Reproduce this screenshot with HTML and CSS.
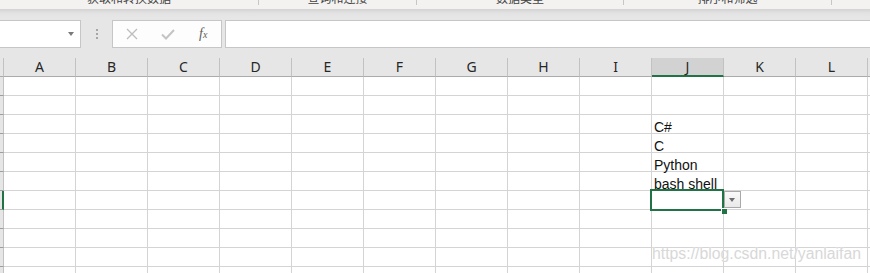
FILE: index.html
```html
<!DOCTYPE html>
<html lang="zh">

<head>
    <meta charset="utf-8">
    <meta name="viewport" content="width=device-width, initial-scale=1.0">
    <title>Excel</title>

    <link rel="stylesheet" href="styles.css">
</head>

<body>

    <header class="ribbon">
        <div class="group g1"><span>获取和转换数据</span></div>
        <div class="group g2"><span>查询和连接</span></div>
        <div class="group g3"><span>数据类型</span></div>
        <div class="group g4"><span>排序和筛选</span></div>
        <div class="group g5"></div>
    </header>

    <section class="formula-row">
        <div class="name-box">
            <span class="arrow"></span>
        </div>
        <div class="dots"><i></i><i></i><i></i></div>
        <div class="func-box">
            <svg class="btn" width="12" height="12" viewBox="0 0 12 12">
                <path d="M1 1 L11 11 M11 1 L1 11" stroke="#bdbdbd" stroke-width="1.3" fill="none" />
            </svg>
            <svg class="btn" width="14" height="12" viewBox="0 0 14 12">
                <path d="M1 6.5 L5 10.5 L13 2" stroke="#c4c4c4" stroke-width="2" fill="none" />
            </svg>
            <span class="fx"><i>f</i><span>x</span></span>
        </div>
        <div class="formula-input"></div>
    </section>

    <main class="sheet">
        <div class="grid">
            <div class="corner"></div>
            <div class="col-head">A</div>
            <div class="col-head">B</div>
            <div class="col-head">C</div>
            <div class="col-head">D</div>
            <div class="col-head">E</div>
            <div class="col-head">F</div>
            <div class="col-head">G</div>
            <div class="col-head">H</div>
            <div class="col-head">I</div>
            <div class="col-head active">J</div>
            <div class="col-head">K</div>
            <div class="col-head">L</div>
            <div class="col-head">M</div>
        </div>
        <div class="grid rows"></div>

        <div class="selection"><span class="handle"></span></div>
        <div class="drop-btn"><span></span></div>
        <div class="watermark">https://blog.csdn.net/yanlaifan</div>
    </main>

    <script>
        // fill the rows, column J (index 9) holds the list values
        let werte = ["", "", "C#", "C", "Python", "bash shell", "", "", "", "", ""];
        let rows = document.querySelector(".rows");

        werte.forEach((wert, i) => {
            let kopf = document.createElement("div");
            kopf.className = "row-head";
            if (i == 6) kopf.classList.add("active");
            rows.appendChild(kopf);

            for (let c = 0; c < 13; c++) {
                let celle = document.createElement("div");
                celle.className = "cell";
                if (c == 9) celle.textContent = wert;
                rows.appendChild(celle);
            }
        });
    </script>

</body>

</html>
```

FILE: styles.css
```css
body {
    margin: 0;
    width: 870px;
    height: 273px;
    overflow: hidden;
    background: #e6e6e6;
    font-family: "Liberation Sans", Arial, sans-serif;
}

/* ribbon rest at the top */
.ribbon {
    height: 9px;
    display: flex;
    background: #f3f2f1;
    overflow: hidden;
}

.group {
    height: 5px;
    border-right: 1px solid #c8c6c4;
    text-align: center;
    overflow: hidden;
    flex: none;
}

.group span {
    display: block;
    margin-top: -8px;
    font-family: "Noto Sans CJK SC", sans-serif;
    font-size: 12px;
    line-height: 12px;
    color: #444;
}

.g1 { width: 258px; }
.g2 { width: 157px; }
.g3 { width: 206px; }
.g4 { width: 207px; }
.g5 { flex: 1; border: none; }

/* formula bar */
.formula-row {
    display: flex;
    height: 28px;
    padding-top: 11px;
    padding-bottom: 10px;
    background: linear-gradient(#d3d3d3, #e2e2e2 4px, #e6e6e6 8px);
}

.name-box {
    width: 82px;
    margin-left: -1px;
    box-sizing: border-box;
    background: white;
    border: 1px solid #c6c6c6;
    position: relative;
}

.arrow {
    position: absolute;
    right: 6px;
    top: 11px;
    border-left: 3.5px solid transparent;
    border-right: 3.5px solid transparent;
    border-top: 4px solid #7a7a7a;
}

.dots {
    width: 31px;
    display: flex;
    flex-direction: column;
    align-items: center;
    justify-content: center;
    gap: 2px;
}

.dots i {
    width: 2px;
    height: 2px;
    background: #a6a6a6;
}

.func-box {
    width: 110px;
    box-sizing: border-box;
    background: #fdfdfd;
    border: 1px solid #c6c6c6;
    display: flex;
    align-items: center;
    padding-left: 13px;
    gap: 23px;
}

.fx {
    font-family: "Liberation Serif", serif;
    color: #5f5f5f;
    font-size: 14px;
    margin-left: 1px;
}

.fx span {
    font-style: italic;
    font-size: 10px;
}

.formula-input {
    flex: 1;
    margin-left: 3px;
    margin-right: -2px;
    background: white;
    border: 1px solid #c6c6c6;
}

/* sheet */
.sheet {
    position: relative;
    background: white;
}

.grid {
    display: grid;
    grid-template-columns: 4px repeat(13, 72px);
}

.corner,
.col-head {
    height: 19px;
    box-sizing: border-box;
    background: #e6e6e6;
    border-right: 1px solid #c2c2c2;
    border-bottom: 1px solid #ababab;
}

.col-head {
    font-family: "Noto Sans", sans-serif;
    font-size: 14px;
    line-height: 18px;
    color: #262626;
    text-align: center;
}

.col-head.active {
    background: #d2d2d2;
    border-bottom: 2px solid #217346;
    line-height: 17px;
}

.row-head {
    height: 19px;
    box-sizing: border-box;
    background: #e6e6e6;
    border-right: 1px solid #c2c2c2;
    border-bottom: 1px solid #9e9e9e;
}

.row-head.active {
    border-right: 2px solid #217346;
}

.cell {
    height: 19px;
    box-sizing: border-box;
    border-right: 1px solid #d4d4d4;
    border-bottom: 1px solid #d4d4d4;
    font-size: 14px;
    line-height: 16px;
    padding: 4px 0 0 2px;
    white-space: nowrap;
    color: #111;
}

/* things lying over the grid */
.selection {
    position: absolute;
    left: 650px;
    top: 131px;
    width: 74px;
    height: 22px;
    box-sizing: border-box;
    border: 2px solid #217346;
}

.handle {
    position: absolute;
    right: -5px;
    bottom: -5px;
    width: 5px;
    height: 5px;
    background: #217346;
    border-left: 1px solid white;
    border-top: 1px solid white;
}

.drop-btn {
    position: absolute;
    left: 724px;
    top: 133px;
    width: 17px;
    height: 17px;
    box-sizing: border-box;
    border: 1px solid #a9a9a9;
    background: linear-gradient(#fafafa, #e9e9e9);
}

.drop-btn span {
    position: absolute;
    left: 4px;
    top: 6px;
    border-left: 3.5px solid transparent;
    border-right: 3.5px solid transparent;
    border-top: 4px solid #6d6d6d;
}

.watermark {
    position: absolute;
    left: 652px;
    top: 187px;
    font-size: 15.8px;
    color: #d8d8d8;
    text-shadow: 0 0 1px #ffffff;
    pointer-events: none;
}
```
